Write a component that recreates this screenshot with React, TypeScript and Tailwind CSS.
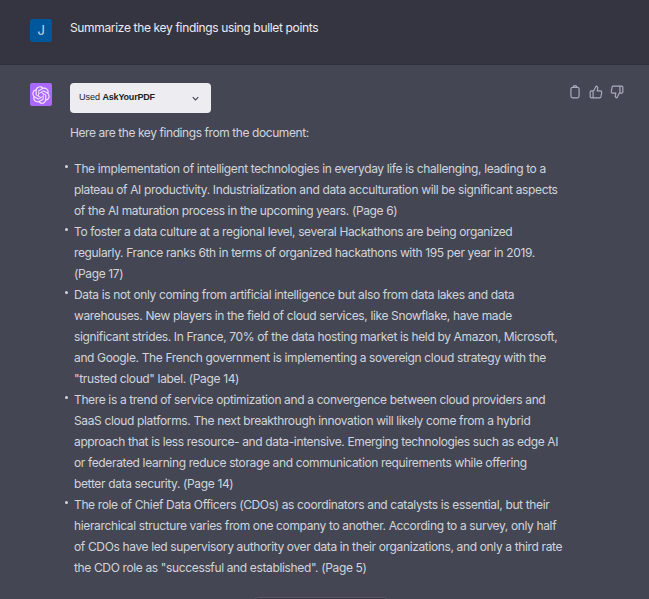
const items: string[][] = [
  [
    "The implementation of intelligent technologies in everyday life is challenging, leading to a",
    "plateau of AI productivity. Industrialization and data acculturation will be significant aspects",
    "of the AI maturation process in the upcoming years. (Page 6)",
  ],
  [
    "To foster a data culture at a regional level, several Hackathons are being organized",
    "regularly. France ranks 6th in terms of organized hackathons with 195 per year in 2019.",
    "(Page 17)",
  ],
  [
    "Data is not only coming from artificial intelligence but also from data lakes and data",
    "warehouses. New players in the field of cloud services, like Snowflake, have made",
    "significant strides. In France, 70% of the data hosting market is held by Amazon, Microsoft,",
    "and Google. The French government is implementing a sovereign cloud strategy with the",
    "\"trusted cloud\" label. (Page 14)",
  ],
  [
    "There is a trend of service optimization and a convergence between cloud providers and",
    "SaaS cloud platforms. The next breakthrough innovation will likely come from a hybrid",
    "approach that is less resource- and data-intensive. Emerging technologies such as edge AI",
    "or federated learning reduce storage and communication requirements while offering",
    "better data security. (Page 14)",
  ],
  [
    "The role of Chief Data Officers (CDOs) as coordinators and catalysts is essential, but their",
    "hierarchical structure varies from one company to another. According to a survey, only half",
    "of CDOs have led supervisory authority over data in their organizations, and only a third rate",
    "the CDO role as \"successful and established\". (Page 5)",
  ],
];

export default function App() {
  return (
    <div className="relative h-[599px] w-[649px] overflow-hidden bg-[#444654] font-['Inter','Liberation_Sans',sans-serif] text-[12px] tracking-[-0.36px] text-[#d1d5db]">
      <div className="flex h-[65px] border-b border-[#2f3039] bg-[#343541] pl-[30px] pt-[19px]">
        <div className="flex h-[23px] w-[22px] items-center justify-center rounded-[2px] bg-[#01579b] text-[13px] text-[#c9d6e2]">J</div>
        <div className="ml-[18px] text-[12px] leading-[18px] tracking-[-0.34px] text-[#ececf1]">Summarize the key findings using bullet points</div>
      </div>
      <div className="flex pl-[30px] pt-[18px]">
        <div className="flex h-[23px] w-[22px] items-center justify-center rounded-[2px] bg-[#ab68ff]">
          <svg viewBox="0 0 41 41" width="18" height="18" fill="#f3e8ff">
            <path d="M37.5324 16.8707C37.9808 15.5241 38.1363 14.0974 37.9886 12.6859C37.8409 11.2744 37.3934 9.91076 36.676 8.68622C35.6126 6.83404 33.9882 5.3676 32.0373 4.4985C30.0864 3.62941 27.9098 3.40259 25.8215 3.85078C24.8796 2.7893 23.7219 1.94125 22.4257 1.36341C21.1295 0.785575 19.7249 0.491269 18.3058 0.500197C16.1708 0.495044 14.0893 1.16803 12.3614 2.42214C10.6335 3.67624 9.34853 5.44666 8.6917 7.47815C7.30085 7.76286 5.98686 8.3414 4.8377 9.17505C3.68854 10.0087 2.73073 11.0782 2.02839 12.312C0.956464 14.1591 0.498905 16.2988 0.721698 18.4228C0.944492 20.5467 1.83612 22.5449 3.268 24.1293C2.81966 25.4759 2.66413 26.9026 2.81182 28.3141C2.95951 29.7256 3.40701 31.0892 4.12437 32.3138C5.18791 34.1659 6.8123 35.6322 8.76321 36.5013C10.7141 37.3704 12.8907 37.5973 14.9789 37.1492C15.9208 38.2107 17.0786 39.0587 18.3747 39.6366C19.6709 40.2144 21.0755 40.5087 22.4946 40.4998C24.6307 40.5054 26.7133 39.8321 28.4418 38.5772C30.1704 37.3223 31.4556 35.5506 32.1119 33.5179C33.5027 33.2332 34.8167 32.6547 35.9659 31.821C37.115 30.9874 38.0728 29.9178 38.7752 28.684C39.8458 26.8371 40.3023 24.6979 40.0789 22.5748C39.8556 20.4517 38.9639 18.4544 37.5324 16.8707ZM22.4978 37.8849C20.7443 37.8874 19.0459 37.2733 17.6994 36.1501C17.7601 36.117 17.8666 36.0586 17.936 36.0161L25.9004 31.4156C26.1003 31.3019 26.2663 31.137 26.3813 30.9378C26.4964 30.7386 26.5563 30.5124 26.5549 30.2825V19.0542L29.9213 20.998C29.9389 21.0068 29.9541 21.0198 29.9656 21.0359C29.977 21.052 29.9842 21.0707 29.9867 21.0902V30.3889C29.9842 32.375 29.1946 34.2791 27.7909 35.6841C26.3872 37.0892 24.4838 37.8806 22.4978 37.8849ZM6.39227 31.0064C5.51397 29.4888 5.19742 27.7107 5.49804 25.9832C5.55718 26.0187 5.66048 26.0818 5.73461 26.1244L13.699 30.7248C13.8975 30.8408 14.1233 30.902 14.3532 30.902C14.583 30.902 14.8088 30.8408 15.0073 30.7248L24.731 25.1103V28.9979C24.7321 29.0177 24.7283 29.0376 24.7199 29.0556C24.7115 29.0736 24.6988 29.0893 24.6829 29.1012L16.6317 33.7497C14.9096 34.7416 12.8643 35.0097 10.9447 34.4954C9.02506 33.9811 7.38785 32.7263 6.39227 31.0064ZM4.29707 13.6194C5.17156 12.0998 6.55279 10.9364 8.19885 10.3327C8.19885 10.4013 8.19491 10.5228 8.19491 10.6071V19.808C8.19351 20.0378 8.25334 20.2638 8.36823 20.4629C8.48312 20.6619 8.64893 20.8267 8.84863 20.9404L18.5723 26.5542L15.206 28.4979C15.1894 28.5089 15.1703 28.5155 15.1505 28.5173C15.1307 28.5191 15.1107 28.516 15.0924 28.5082L7.04046 23.8557C5.32135 22.8601 4.06716 21.2235 3.55289 19.3046C3.03862 17.3858 3.30624 15.3413 4.29707 13.6194ZM31.955 20.0556L22.2312 14.4411L25.5976 12.4981C25.6142 12.4872 25.6333 12.4805 25.6531 12.4787C25.6729 12.4769 25.6928 12.4801 25.7111 12.4879L33.7631 17.1364C34.9967 17.849 36.0017 18.8982 36.6606 20.1613C37.3194 21.4244 37.6047 22.849 37.4832 24.2684C37.3617 25.6878 36.8382 27.0432 35.9743 28.1759C35.1103 29.3086 33.9415 30.1717 32.6047 30.6641C32.6047 30.5947 32.6047 30.4733 32.6047 30.3889V21.188C32.6066 20.9586 32.5474 20.7328 32.4332 20.5338C32.319 20.3348 32.154 20.1698 31.955 20.0556ZM35.3055 15.0128C35.2464 14.9765 35.1431 14.9142 35.069 14.8717L27.1045 10.2712C26.906 10.1554 26.6803 10.0943 26.4504 10.0943C26.2206 10.0943 25.9948 10.1554 25.7963 10.2712L16.0726 15.8858V11.9982C16.0715 11.9783 16.0753 11.9585 16.0837 11.9405C16.0921 11.9225 16.1048 11.9068 16.1207 11.8949L24.1719 7.25025C25.4053 6.53903 26.8158 6.19376 28.2383 6.25482C29.6608 6.31589 31.0364 6.78077 32.2044 7.59508C33.3723 8.40939 34.2842 9.53945 34.8334 10.8531C35.3826 12.1667 35.5464 13.6095 35.3055 15.0128ZM14.2424 21.9419L10.8752 19.9981C10.8576 19.9893 10.8423 19.9763 10.8309 19.9602C10.8195 19.9441 10.8122 19.9254 10.8098 19.9058V10.6071C10.8107 9.18295 11.2173 7.78848 11.9819 6.58696C12.7466 5.38544 13.8377 4.42659 15.1275 3.82264C16.4173 3.21869 17.8524 2.99464 19.2649 3.1767C20.6775 3.35876 22.0089 3.93941 23.1034 4.85067C23.0427 4.88379 22.937 4.94215 22.8668 4.98473L14.9024 9.58517C14.7025 9.69878 14.5366 9.86356 14.4215 10.0626C14.3065 10.2616 14.2466 10.4877 14.2479 10.7175L14.2424 21.9419ZM16.071 17.9991L20.4018 15.4978L24.7325 17.9975V22.9985L20.4018 25.4983L16.071 22.9985V17.9991Z" />
          </svg>
        </div>
        <div className="ml-[18px] w-[490px]">
          <div className="flex h-[30px] w-[141px] items-center justify-between rounded-[4px] bg-[#ececf1] pl-[9px] pr-[10px] font-['Liberation_Sans',sans-serif] text-[9px] tracking-normal text-[#202123]">
            <span>Used <b className="font-semibold tracking-[-0.2px]">AskYourPDF</b></span>
            <svg viewBox="0 0 24 24" width="11" height="11" fill="none" stroke="#40414f" strokeWidth="2.4"><path d="m6 9 6 6 6-6" /></svg>
          </div>
          <p className="mt-[9px] leading-[21px] tracking-[-0.42px]">Here are the key findings from the document:</p>
          <ul className="mt-[15px] ml-[4px]">
            {items.map((lines, i) => (
              <li key={i} className="relative">
                <span className="absolute left-[-9px] top-[7px] h-[3px] w-[3px] rounded-full bg-[#d1d5db]" />
                {lines.map((l, j) => (
                  <div key={j} className="whitespace-nowrap leading-[21px]">{l}</div>
                ))}
              </li>
            ))}
          </ul>
        </div>
      </div>
      <div className="absolute right-[25px] top-[85px] flex gap-[7px] text-[#acacbe]">
        <svg viewBox="0 0 24 24" width="14" height="14" fill="none" stroke="currentColor" strokeWidth="2"><rect x="5" y="4" width="14" height="18" rx="3" /><path d="M9 4a3 3 0 0 1 6 0" /></svg>
        <svg viewBox="0 0 24 24" width="14" height="14" fill="none" stroke="currentColor" strokeWidth="2" strokeLinejoin="round"><path d="M7 10v12M15 5.9 14 10h5.8a2 2 0 0 1 2 2.4l-1.4 8A2 2 0 0 1 18.5 22H4a2 2 0 0 1-2-2v-8a2 2 0 0 1 2-2h2.8a2 2 0 0 0 1.8-1.1L12 2a3.1 3.1 0 0 1 3 3.9Z" /></svg>
        <svg viewBox="0 0 24 24" width="14" height="14" fill="none" stroke="currentColor" strokeWidth="2" strokeLinejoin="round"><path d="M17 14V2M9 18.1 10 14H4.2a2 2 0 0 1-2-2.4l1.4-8A2 2 0 0 1 5.5 2H20a2 2 0 0 1 2 2v8a2 2 0 0 1-2 2h-2.8a2 2 0 0 0-1.8 1.1L12 22a3.1 3.1 0 0 1-3-3.9Z" /></svg>
      </div>
      <div className="absolute bottom-[-30px] left-[254px] h-[32px] w-[134px] rounded-[4px] border border-[#565869] bg-[#343541]" />
    </div>
  );
}
